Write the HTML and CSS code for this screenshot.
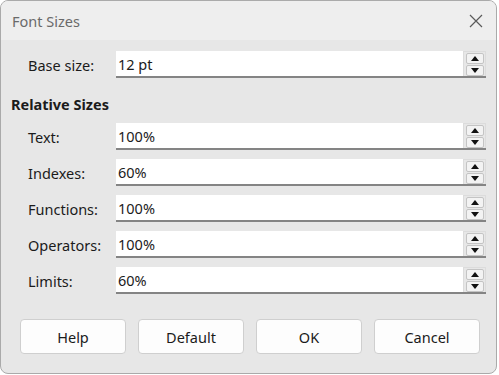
FILE: index.html
```html
<!DOCTYPE html>
<html lang="en">
<head>
    <meta charset="UTF-8">
    <title>Font Sizes</title>
    <link rel="stylesheet" href="styles.css">
</head>
<body>
    <div class="dialog">
        <header class="titlebar">
            <span class="title">Font Sizes</span>
            <span class="close">
                <svg width="14" height="14" viewBox="0 0 14 14"><path d="M1 1 L13 13 M13 1 L1 13" stroke="#5a5a5a" stroke-width="1.2" fill="none"/></svg>
            </span>
        </header>
        <main class="content">
            <div class="row base">
                <label>Base size:</label>
                <div class="field focused">
                    <span class="value">12 pt</span>
                    <div class="spin"><span class="up"></span><span class="down"></span></div>
                </div>
            </div>

            <h3 class="section">Relative Sizes</h3>

            <div class="rows">
                <div class="row">
                    <label>Text:</label>
                    <div class="field"><span class="value">100%</span><div class="spin"><span class="up"></span><span class="down"></span></div></div>
                </div>
                <div class="row">
                    <label>Indexes:</label>
                    <div class="field"><span class="value">60%</span><div class="spin"><span class="up"></span><span class="down"></span></div></div>
                </div>
                <div class="row">
                    <label>Functions:</label>
                    <div class="field"><span class="value">100%</span><div class="spin"><span class="up"></span><span class="down"></span></div></div>
                </div>
                <div class="row">
                    <label>Operators:</label>
                    <div class="field"><span class="value">100%</span><div class="spin"><span class="up"></span><span class="down"></span></div></div>
                </div>
                <div class="row">
                    <label>Limits:</label>
                    <div class="field"><span class="value">60%</span><div class="spin"><span class="up"></span><span class="down"></span></div></div>
                </div>
            </div>

            <div class="buttons">
                <button>Help</button>
                <button>Default</button>
                <button>OK</button>
                <button>Cancel</button>
            </div>
        </main>
    </div>
</body>
</html>
```

FILE: styles.css
```css
body, h3 {
    margin: 0;
    padding: 0;
}

body {
    font-family: "Noto Sans", Arial, sans-serif;
    font-size: 14.5px;
    color: #1b1b1b;
    background-color: #ffffff;
}

.dialog {
    width: 495px;
    height: 372px;
    border: 1px solid #aaaaaa;
    border-radius: 8px;
    background-color: #e7e7e7;
    overflow: hidden;
    display: flex;
    flex-direction: column;
}

.titlebar {
    height: 39px;
    background-color: #eeeeee;
    display: flex;
    align-items: center;
    justify-content: space-between;
    padding: 0 13px 0 11px;
}

.title {
    color: #6a6a6a;
    font-size: 14.5px;
}

.close {
    display: flex;
}

.content {
    padding: 11px 10px 0 10px;
}

.row {
    display: flex;
    align-items: center;
    height: 27px;
}

.row label {
    width: 88px;
    padding-left: 17px;
}

.field {
    flex: 1;
    height: 25px;
    display: flex;
    border-bottom: 2px solid #848484;
}

.value {
    flex: 1;
    background-color: #ffffff;
    padding-left: 2px;
    display: flex;
    align-items: center;
}

.spin {
    width: 23px;
    display: flex;
    flex-direction: column;
    align-items: center;
    justify-content: center;
    gap: 1px;
    border: 1px solid #dcdcdc;
    border-bottom: none;
    box-sizing: border-box;
}

.spin span {
    width: 18px;
    height: 11px;
    box-sizing: border-box;
    border: 1px solid #c4c4c4;
    border-radius: 2px;
    background-color: #f3f3f3;
    position: relative;
}

.spin span::after {
    content: "";
    position: absolute;
    left: 4px;
    width: 0;
    height: 0;
    border-left: 4px solid transparent;
    border-right: 4px solid transparent;
}

.spin .up::after {
    top: 2px;
    border-bottom: 5px solid #111111;
}

.spin .down::after {
    top: 2px;
    border-top: 5px solid #111111;
}

.section {
    font-size: 14.5px;
    font-weight: bold;
    margin: 17px 0 0 0;
    height: 19px;
    line-height: 19px;
}

.rows {
    display: flex;
    flex-direction: column;
    gap: 9px;
    margin-top: 9px;
}

.buttons {
    display: flex;
    gap: 12px;
    padding: 25px 0 0 9px;
}

.buttons button {
    width: 106px;
    height: 35px;
    font-family: "Noto Sans", Arial, sans-serif;
    font-size: 14.5px;
    color: #1b1b1b;
    background-color: #fdfdfd;
    border: 1px solid #cfcfcf;
    border-radius: 4px;
}
```
